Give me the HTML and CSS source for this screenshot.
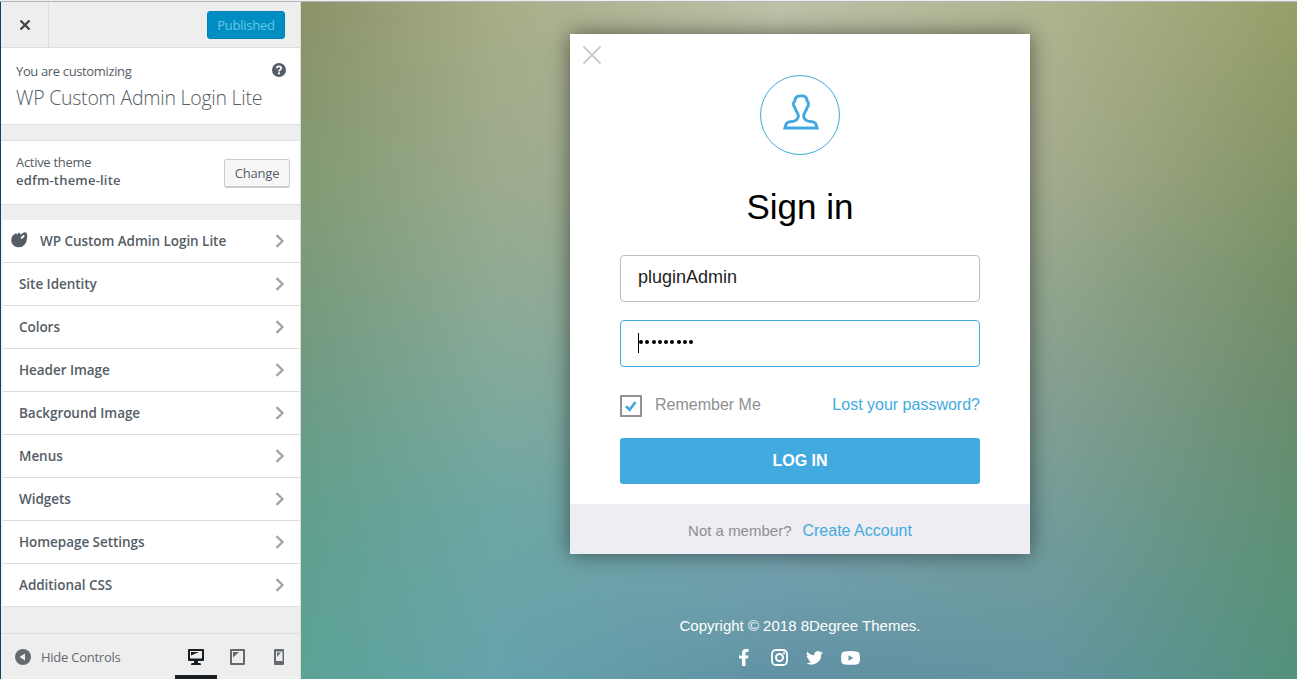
FILE: index.html
```
<!DOCTYPE html>
<html lang="en">
<head>
<meta charset="utf-8">
<title>Customize: WP Custom Admin Login Lite</title>
<link rel="stylesheet" href="styles.css">
</head>
<body>
<div class="window">
  <aside class="sidebar">
    <header class="topbar">
      <div class="close"><svg width="12" height="12" viewBox="0 0 12 12"><path d="M1.5 1.5l9 9M10.500 1.500l-9 9" stroke="#444" stroke-width="2.300"/></svg></div>
      <span class="published">Published</span>
    </header>
    <section class="intro">
      <div class="intro-label">You are customizing</div>
      <div class="intro-title">WP Custom Admin Login Lite</div>
      <span class="help"><svg width="14" height="14" viewBox="0 0 14 14"><circle cx="7" cy="7" r="7" fill="#555d66"/><path d="M4.700 5.200C4.700 2.600 9.300 2.700 9.200 5.200C9.200 6.600 7 6.600 7 8.500" fill="none" stroke="#fff" stroke-width="1.700"/><rect x="6" y="9.400" width="2" height="1.900" fill="#fff"/></svg></span>
    </section>
    <section class="theme">
      <div class="theme-text">
        <div class="theme-label">Active theme</div>
        <div class="theme-name">edfm-theme-lite</div>
      </div>
      <span class="change">Change</span>
    </section>
    <ul class="menu">
      <li class="plugin"><svg class="blob" width="17" height="16" viewBox="0 0 17 16"><path d="M8 0.600C9 0.300 8.700 2.200 9.500 2.500C11 2 12.500 0 14.500 0.400C16.600 1 16.400 4 16 6.500C15.500 11.500 12.500 15.300 8 15.300C3.600 15.300 0.200 12.300 0.200 8.200C0.200 5 2 2.500 4.600 1.400C5.600 1 5.600 2.500 6.500 2.300C7.300 2 7.200 0.800 8 0.600Z" fill="#555d66"/><ellipse cx="11.600" cy="5" rx="2.400" ry="1.100" transform="rotate(-42 11.600 5)" fill="#fff"/></svg><span>WP Custom Admin Login Lite</span><svg class="chev" width="10" height="14" viewBox="0 0 10 14"><path d="M1.500 1.200L7.500 7L1.500 12.800"/></svg></li>
      <li><span>Site Identity</span><svg class="chev" width="10" height="14" viewBox="0 0 10 14"><path d="M1.500 1.200L7.500 7L1.500 12.800"/></svg></li>
      <li><span>Colors</span><svg class="chev" width="10" height="14" viewBox="0 0 10 14"><path d="M1.500 1.200L7.500 7L1.500 12.800"/></svg></li>
      <li><span>Header Image</span><svg class="chev" width="10" height="14" viewBox="0 0 10 14"><path d="M1.500 1.200L7.500 7L1.500 12.800"/></svg></li>
      <li><span>Background Image</span><svg class="chev" width="10" height="14" viewBox="0 0 10 14"><path d="M1.500 1.200L7.500 7L1.500 12.800"/></svg></li>
      <li><span>Menus</span><svg class="chev" width="10" height="14" viewBox="0 0 10 14"><path d="M1.500 1.200L7.500 7L1.500 12.800"/></svg></li>
      <li><span>Widgets</span><svg class="chev" width="10" height="14" viewBox="0 0 10 14"><path d="M1.500 1.200L7.500 7L1.500 12.800"/></svg></li>
      <li><span>Homepage Settings</span><svg class="chev" width="10" height="14" viewBox="0 0 10 14"><path d="M1.500 1.200L7.500 7L1.500 12.800"/></svg></li>
      <li><span>Additional CSS</span><svg class="chev" width="10" height="14" viewBox="0 0 10 14"><path d="M1.500 1.200L7.500 7L1.500 12.800"/></svg></li>
    </ul>
    <footer class="controls">
      <svg width="16" height="16" viewBox="0 0 16 16"><circle cx="8" cy="8" r="8" fill="#656a6f"/><path d="M4.500 8L10 4.400V11.600Z" fill="#eee"/></svg>
      <span class="hide">Hide Controls</span>
      <div class="devices">
        <span class="device active"><svg width="16" height="16" viewBox="0 0 16 16"><path fill-rule="evenodd" d="M1 0H15Q16 0 16 1V11Q16 12 15 12H10V14H12Q13 14 13 16H3Q3 14 4 14H6V12H1Q0 12 0 11V1Q0 0 1 0ZM2 2V9.500H14V2Z" fill="#191e23"/><path d="M3 3H11L3 6.600Z" fill="#191e23"/></svg></span>
        <span class="device"><svg width="15" height="16" viewBox="0 0 15 16"><path fill-rule="evenodd" d="M1 0H14Q15 0 15 1V15Q15 16 14 16H1Q0 16 0 15V1Q0 0 1 0ZM2 2V14H13V2Z" fill="#656a6f"/><path d="M3 3H9L3 8.500Z" fill="#656a6f"/></svg></span>
        <span class="device"><svg width="10" height="16" viewBox="0 0 10 16"><path fill-rule="evenodd" d="M1 0H9Q10 0 10 1V15Q10 16 9 16H1Q0 16 0 15V1Q0 0 1 0ZM2 2.500V12H8.500V2.500Z" fill="#656a6f"/><path d="M3 3.500H7L3 8Z" fill="#656a6f"/></svg></span>
      </div>
    </footer>
  </aside>
  <main class="preview">
    <div class="backdrop"><i class="b1"></i><i class="b2"></i><i class="b3"></i><i class="b4"></i><i class="b5"></i></div>
    <section class="card">
      <svg class="dismiss" width="18" height="18" viewBox="0 0 18 18"><path d="M.500 .500l17 17M17.500 .500l-17 17" stroke="#ccc" stroke-width="2"/></svg>
      <div class="avatar"><svg width="36" height="36" viewBox="0 0 36 36"><path d="M18 1.700C21.500 1.400 24.200 3.500 24.200 7C26.200 8.500 25.700 12 24.100 13.500C23.600 17 20.300 18.800 20.700 22.500C21 26.300 24 27.400 29 27.800C32 28.200 33 29 34.100 34H1.900C3 29 4 28.200 7 27.800C12 27.400 15 26.300 15.300 22.500C15.700 18.800 12.400 17 11.900 13.500C10.300 12 9.800 8.500 11.800 7C11.800 4 14 1.700 18 1.700Z" fill="none" stroke="#42aadf" stroke-width="3"/></svg></div>
      <h1>Sign in</h1>
      <div class="field">pluginAdmin</div>
      <div class="field password"><span class="caret"></span><span class="dots"><b></b><b></b><b></b><b></b><b></b><b></b><b></b><b></b><b></b></span></div>
      <div class="options">
        <span class="check"><svg width="12" height="12" viewBox="0 0 12 12"><path d="M1 6.300L4.700 9.700L10.500 2" fill="none" stroke="#42aadf" stroke-width="2.700"/></svg></span>
        <span class="remember">Remember Me</span>
        <a class="lost">Lost your password?</a>
      </div>
      <div class="login">LOG IN</div>
      <div class="signup"><span>Not a member?</span><a>Create Account</a></div>
    </section>
    <div class="copyright">Copyright © 2018 8Degree Themes.</div>
    <div class="social">
      <svg class="facebook" width="10" height="17" viewBox="0 0 10 17"><path d="M3 17V9.500H0V6.500H3V4.300C3 1.500 4.500 0 7 0H9.500V3H8C6.700 3 6.500 3.500 6.500 4.500V6.500H9.500L9 9.500H6.500V17Z" fill="#fff"/></svg>
      <svg width="17" height="17" viewBox="0 0 17 17"><rect x="1" y="1" width="15" height="15" rx="4" fill="none" stroke="#fff" stroke-width="1.800"/><circle cx="8.500" cy="8.500" r="3.500" fill="none" stroke="#fff" stroke-width="2"/><circle cx="13" cy="4.200" r="1.100" fill="#fff"/></svg>
      <svg width="17" height="14" viewBox="0 0 24 20"><path d="M24 2.400a10 10 0 0 1-2.800.800A5 5 0 0 0 23.300.500a10 10 0 0 1-3.100 1.200A4.900 4.900 0 0 0 11.800 6.100 14 14 0 0 1 1.700 1a4.900 4.900 0 0 0 1.500 6.500A5 5 0 0 1 1 6.900c0 2.300 1.600 4.400 3.900 4.900a5 5 0 0 1-2.200.1 4.900 4.900 0 0 0 4.600 3.400A9.900 9.900 0 0 1 0 17.300 14 14 0 0 0 21.500 4.900 10 10 0 0 0 24 2.400Z" fill="#fff"/></svg>
      <svg width="19" height="14" viewBox="0 0 19 14"><path fill-rule="evenodd" d="M3.500 .500Q9.500-.3 15.500 .500Q18.200 .8 18.600 3Q19.200 7 18.600 11Q18.200 13.200 15.500 13.500Q9.500 14.200 3.500 13.500Q.8 13.200 .4 11Q-.2 7 .4 3Q.8 .8 3.500 .500ZM7.500 4.200V9.800L12.300 7Z" fill="#fff"/></svg>
    </div>
  </main>
</div>
</body>
</html>
```
FILE: styles.css
```
* { box-sizing: border-box; }
body { margin: 0; background: #eee; padding-top: 1px; font-family: "Liberation Sans", Arial, sans-serif; }
svg { display: block; flex: none; }
.window { display: flex; width: 1297px; height: 678px; border-top: 1px solid #b3b6b8; overflow: hidden; }
.sidebar { width: 301px; height: 677px; display: flex; flex-direction: column; background: #eee; border-left: 1px solid #04485a; border-right: 1px solid #ddd; font-family: "Open Sans", "Noto Sans", sans-serif; font-size: 13px; color: #555d66; white-space: nowrap; }
.topbar { height: 46px; display: flex; align-items: center; justify-content: space-between; padding-right: 15px; border-bottom: 1px solid #ddd; flex: none; }
.close { width: 48px; height: 45px; border-right: 1px solid #ddd; display: flex; align-items: center; justify-content: center; }
.published { width: 78px; height: 28px; line-height: 26px; border: 1px solid #0081b8; border-radius: 3px; background: #008ec2; color: #66c6e4; text-align: center; letter-spacing: -.25px; margin-top: 1px; }
.intro { position: relative; height: 77px; flex: none; padding: 14px 15px 0; background: #fff; border-bottom: 1px solid #ddd; }
.intro-label { line-height: 19px; letter-spacing: -.36px; }
.intro-title { font-size: 19.500px; font-weight: 300; line-height: 26px; margin-top: 4px; letter-spacing: -.24px; }
.help { position: absolute; left: 271px; top: 15px; }
.theme { display: flex; justify-content: space-between; align-items: center; height: 65px; flex: none; margin: 15px 0; padding: 0 10px 0 15px; background: #fff; border-top: 1px solid #ddd; border-bottom: 1px solid #ddd; }
.theme-text { margin-bottom: 4px; }
.theme-label { line-height: 18px; letter-spacing: -.3px; }
.theme-name { line-height: 18px; font-weight: 600; letter-spacing: .2px; }
.change { width: 66px; height: 29px; margin-top: 2px; line-height: 26px; text-align: center; background: #f7f7f7; border: 1px solid #ccc; border-bottom-width: 2px; border-radius: 3px; letter-spacing: -.2px; }
.menu { list-style: none; margin: 0; padding: 0; border-left: 2px solid #f4f4f4; }
.menu li { display: flex; align-items: center; height: 43px; padding: 0 15px 0 16px; background: #fff; border-bottom: 1px solid #ddd; font-size: 13.500px; font-weight: 600; letter-spacing: -.05px; }
.menu .plugin { padding-left: 8px; }
.blob { margin-right: 12px; margin-top: -3px; }
.chev { margin-left: auto; }
.chev path { fill: none; stroke: #a0a5aa; stroke-width: 2.300; }
.controls { display: flex; align-items: center; height: 46px; margin-top: auto; padding-left: 14px; border-top: 1px solid #ddd; color: #656a6f; flex: none; }
.hide { margin-left: 10px; letter-spacing: -.25px; }
.devices { display: flex; margin-left: auto; height: 45px; }
.device { width: 41.500px; display: flex; align-items: center; justify-content: center; }
.device.active { width: 42px; border-bottom: 4px solid #191e23; padding-top: 4px; }

.preview { position: relative; isolation: isolate; width: 996px; height: 677px; display: flex; flex-direction: column; align-items: center; padding: 32px 0 0 2px; }
.backdrop { position: absolute; inset: 0; z-index: -1; }
.backdrop i { position: absolute; inset: 0; }
.b1 { background: linear-gradient(#8c9268, #819b74 28%, #739a80 50%, #689d88 65%, #60a08f 80%, #5ca396); }
.b2 { background: linear-gradient(#a8ae88, #9cab8e 28%, #8caa96 45%, #7da99d 60%, #6ea7a4 75%, #66a3ad); mask-image: linear-gradient(90deg, transparent, #000 200px); }
.b3 { background: linear-gradient(#bdc2a8, #a6b198 30%, #82a5a4 65%, #719fad 85%, #6191a4); mask-image: linear-gradient(90deg, transparent 200px, #000 480px); }
.b4 { background: linear-gradient(#adb38d, #a3ab8c 25%, #90a48c 43%, #829f92 60%, #729c99 77%, #6395a0); mask-image: linear-gradient(90deg, transparent 480px, #000 760px); }
.b5 { background: linear-gradient(#969f69, #8c9866 15%, #758f67 42%, #698c6d 60%, #5c9074 80%, #53917c); mask-image: linear-gradient(90deg, transparent 760px, #000 996px); }
.card { position: relative; width: 460px; height: 520px; display: flex; flex-direction: column; padding: 41px 50px 0; background: #fff; box-shadow: 0 0 20px rgba(0,0,0,.5); }
.dismiss { position: absolute; left: 13px; top: 12px; }
.avatar { width: 80px; height: 80px; align-self: center; border: 1px solid #42aadf; border-radius: 50%; padding: 18px 0 0 22px; }
h1 { margin: 29px 0 25px; font-size: 35px; font-weight: 400; line-height: 46px; text-align: center; color: #000; }
.field { height: 47px; flex: none; border: 1px solid #bdbcc6; border-radius: 4px; padding: 0 17px; font-size: 18px; line-height: 43px; color: #222; }
.password { display: flex; align-items: center; margin-top: 18px; border-color: #42aadf; }
.caret { width: 1px; height: 20px; margin-top: -2px; background: #000; }
.dots { display: flex; gap: 2.250px; margin-top: -3px; }
.dots b { width: 4px; height: 4px; border-radius: 50%; background: #000; }
.options { display: flex; align-items: center; height: 22px; margin-top: 28px; font-size: 16px; color: #8f8f94; }
.check { width: 22px; height: 22px; border: 2px solid #929292; display: flex; align-items: center; justify-content: center; margin-right: 13px; }
.remember, .lost { margin-top: -3px; }
.lost { margin-left: auto; color: #42aadf; }
.login { height: 46px; flex: none; margin-top: 21px; border-radius: 3px; background: #42aadf; color: #fff; font-size: 16px; font-weight: 700; line-height: 45px; text-align: center; }
.signup { display: flex; justify-content: center; align-items: center; gap: 11px; height: 50px; flex: none; margin: 20px -50px 0; padding-top: 3px; background: #ededf2; color: #8f8f94; font-size: 15px; }
.signup a { font-size: 16px; color: #42aadf; }
.copyright { margin-top: 62px; line-height: 20px; font-size: 15px; color: #fff; }
.social { display: flex; align-items: center; gap: 18px; height: 17px; margin: 13px 2px 0 0; }
.facebook { margin-right: 4px; }
```
